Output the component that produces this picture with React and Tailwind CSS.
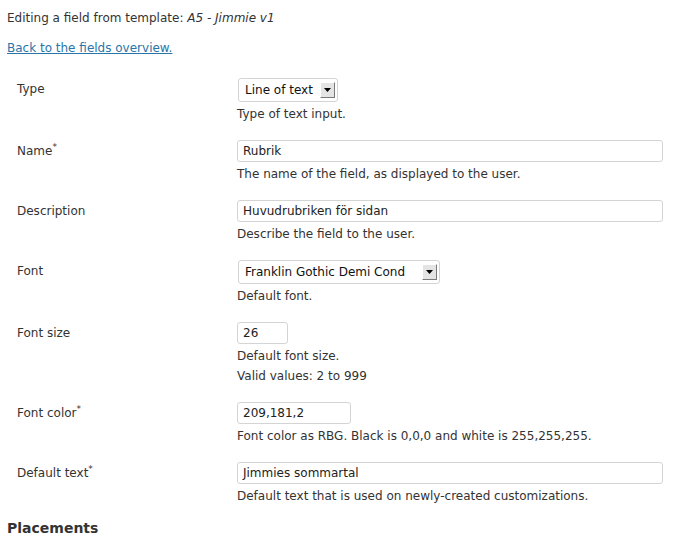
import React from "react";

function Arrow() {
  return (
    <span className="ml-auto mr-[2px] flex h-[16px] w-[15px] items-center justify-center border-t border-l border-t-white border-l-white border-r border-b border-r-[#7a7a7a] border-b-[#7a7a7a] bg-[#e4e4e4]">
      <svg width="7" height="4" viewBox="0 0 7 4"><path d="M0 0H7L3.5 4Z" fill="#000" /></svg>
    </span>
  );
}

function Row({ label, req, children, help }) {
  return (
    <div className="flex pt-[9px] pb-[7px]">
      <div className="w-[230px] shrink-0 pl-[10px]">
        <div className="flex h-[22px] items-center">
          <span>{label}</span>
          {req && <sup className="relative -top-[4px] text-[9px]">*</sup>}
        </div>
      </div>
      <div className="flex flex-col items-start">
        {children}
        <div className="mt-[2px]">
          {help.map((h, i) => (
            <div key={i} className="leading-[20px]">{h}</div>
          ))}
        </div>
      </div>
    </div>
  );
}

function Input({ value, w }) {
  return (
    <div className={`flex h-[22px] items-center rounded-[3px] border border-[#d4d4d4] bg-white pl-[5px] text-[#222] ${w}`}>
      {value}
    </div>
  );
}

function Select({ value, w, h }) {
  return (
    <div className={`ml-[1px] flex items-center rounded-[3px] border border-[#d4d4d4] bg-white pl-[6px] text-[#111] ${w} ${h}`}>
      <span>{value}</span>
      <Arrow />
    </div>
  );
}

export default function App() {
  return (
    <div className="min-h-[545px] bg-white px-[7px] pt-[10px] text-[12px] text-[#333]" style={{ fontFamily: '"DejaVu Sans", sans-serif' }}>
      <p className="leading-[16px]">
        Editing a field from template: <em>A5 - Jimmie v1</em>
      </p>
      <p className="mt-[14px] leading-[16px]">
        <a href="#" className="text-[#2a75a8] underline">Back to the fields overview.</a>
      </p>
      <div className="mt-[13px]">
        <Row label="Type" help={["Type of text input."]}>
          <Select value="Line of text" w="w-[100px]" h="h-[24px]" />
        </Row>
        <Row label="Name" req help={["The name of the field, as displayed to the user."]}>
          <Input value="Rubrik" w="w-[426px]" />
        </Row>
        <Row label="Description" help={["Describe the field to the user."]}>
          <Input value="Huvudrubriken för sidan" w="w-[426px]" />
        </Row>
        <Row label="Font" help={["Default font."]}>
          <Select value="Franklin Gothic Demi Cond" w="w-[202px]" h="h-[24px]" />
        </Row>
        <Row label="Font size" help={["Default font size.", "Valid values: 2 to 999"]}>
          <Input value="26" w="w-[51px]" />
        </Row>
        <Row label="Font color" req help={["Font color as RBG. Black is 0,0,0 and white is 255,255,255."]}>
          <Input value="209,181,2" w="w-[114px]" />
        </Row>
        <Row label="Default text" req help={["Default text that is used on newly-created customizations."]}>
          <Input value="Jimmies sommartal" w="w-[426px]" />
        </Row>
      </div>
      <h2 className="mt-[6px] text-[14px] font-bold leading-[18px] text-[#333]">Placements</h2>
    </div>
  );
}
